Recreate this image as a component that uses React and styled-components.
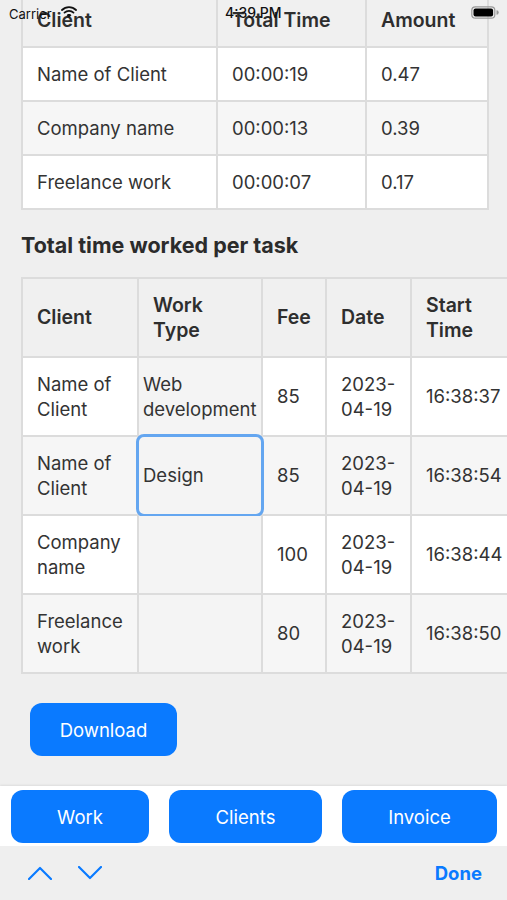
import React from "react";
import styled, { createGlobalStyle } from "styled-components";

const Global = createGlobalStyle`
  html, body { margin: 0; padding: 0; background: #efefef; }
  body { font-family: Inter, "Noto Sans", "Liberation Sans", sans-serif; color: #333; -webkit-font-smoothing: antialiased; }
  * { box-sizing: border-box; }
`;

const BLUE = "#0a7aff";

const Page = styled.div`
  position: relative;
  width: 507px;
  height: 900px;
  overflow: hidden;
  display: flex;
  flex-direction: column;
  background: #efefef;
`;

const Scroll = styled.div`
  flex: 1;
  overflow: hidden;
  min-height: 0;
`;

const Content = styled.div`
  margin-top: -8px;
  padding: 0 0 0 21px;
  display: flex;
  flex-direction: column;
`;

const Table = styled.table`
  border-collapse: collapse;
  table-layout: fixed;
  font-size: 18.5px;
  color: #333;
  width: ${(p) => p.$width}px;
  flex-shrink: 0;
  border: 2px solid #dcdcdc;
`;

const Th = styled.th`
  background: #f0f0f0;
  border: 2px solid #dcdcdc;
  font-weight: 600;
  font-size: 19.5px;
  text-align: left;
  padding: 0 14px;
  height: ${(p) => p.$h}px;
  line-height: 25px;
  color: #2e2e2e;
`;

const Tr = styled.tr`
  background: ${(p) => (p.$alt ? "#f6f6f6" : "#ffffff")};
`;

const Td = styled.td`
  border: 2px solid #dcdcdc;
  padding: 0 14px;
  height: ${(p) => p.$h}px;
  line-height: 25px;
  vertical-align: middle;
`;

const InputTd = styled.td`
  border: 2px solid #dcdcdc;
  background: #f4f4f4;
  padding: 0;
  height: 79px;
  position: relative;
  vertical-align: middle;
`;

const CellInput = styled.div`
  padding: 0 4px;
  line-height: 25px;
  ${(p) =>
    p.$focus &&
    `
    position: absolute;
    inset: -3px -3px -3px -3px;
    border: 3px solid #64a6f0;
    border-radius: 8px;
    display: flex;
    align-items: center;
    padding: 0 4px;
  `}
`;

const Heading = styled.h2`
  margin: 23px 0 20px;
  font-size: 21.5px;
  font-weight: 700;
  color: #2b2b2b;
  line-height: 24px;
`;

const Wide = styled.div`
  width: 520px;
`;

const PrimaryButton = styled.button`
  background: ${BLUE};
  color: #fff;
  border: none;
  border-radius: 12px;
  font-family: inherit;
  font-size: 18.5px;
  height: 53px;
  width: ${(p) => p.$w}px;
  padding: 0;
  cursor: pointer;
`;

const DownloadRow = styled.div`
  margin: 29px 0 30px 9px;
`;

const Toolbar = styled.div`
  background: #fff;
  height: 60px;
  padding: 4px 0 0 11px;
  display: grid;
  grid-template-columns: 138px 153px 155px;
  column-gap: 20px;
  align-items: start;
  box-shadow: 0 -1px 2px rgba(0, 0, 0, 0.08);
`;

const Accessory = styled.div`
  height: 54px;
  background: #efefef;
  display: flex;
  align-items: center;
  padding: 0 25px 0 28px;
  gap: 26px;
`;

const Chevron = styled.svg`
  width: 24px;
  height: 14px;
  display: block;
`;

const Done = styled.span`
  margin-left: auto;
  color: ${BLUE};
  font-weight: 700;
  font-size: 18.5px;
`;

const StatusBar = styled.div`
  position: absolute;
  top: 0;
  left: 0;
  right: 0;
  height: 28px;
  pointer-events: none;
  font-family: Inter, "Liberation Sans", sans-serif;
  color: #111;
`;

const Carrier = styled.span`
  position: absolute;
  left: 9px;
  top: 6px;
  font-size: 13px;
`;

const Clock = styled.span`
  position: absolute;
  left: 225px;
  top: 4px;
  font-size: 14px;
  font-weight: 500;
`;

const Wifi = styled.svg`
  position: absolute;
  left: 61px;
  top: 5px;
`;

const Battery = styled.svg`
  position: absolute;
  left: 471px;
  top: 6px;
`;

const summary = [
  ["Name of Client", "00:00:19", "0.47"],
  ["Company name", "00:00:13", "0.39"],
  ["Freelance work", "00:00:07", "0.17"],
];

const tasks = [
  ["Name of\nClient", "Web\ndevelopment", "85", "2023-\n04-19", "16:38:37"],
  ["Name of\nClient", "Design", "85", "2023-\n04-19", "16:38:54"],
  ["Company\nname", "", "100", "2023-\n04-19", "16:38:44"],
  ["Freelance\nwork", "", "80", "2023-\n04-19", "16:38:50"],
];

const lines = (s) =>
  s.split("\n").map((l, i, a) => (
    <React.Fragment key={i}>
      {l}
      {i < a.length - 1 && <br />}
    </React.Fragment>
  ));

export default function App() {
  return (
    <Page>
      <Global />
      <Scroll>
        <Content>
          <Table $width={466}>
            <colgroup>
              <col style={{ width: 195 }} />
              <col style={{ width: 149 }} />
              <col style={{ width: 122 }} />
            </colgroup>
            <thead>
              <tr>
                <Th $h={54}>Client</Th>
                <Th $h={54}>Total Time</Th>
                <Th $h={54}>Amount</Th>
              </tr>
            </thead>
            <tbody>
              {summary.map((r, i) => (
                <Tr key={i} $alt={i % 2 === 1}>
                  {r.map((c, j) => (
                    <Td key={j} $h={54}>
                      {c}
                    </Td>
                  ))}
                </Tr>
              ))}
            </tbody>
          </Table>

          <Heading>Total time worked per task</Heading>

          <Wide>
            <Table $width={520}>
              <colgroup>
                <col style={{ width: 116 }} />
                <col style={{ width: 124 }} />
                <col style={{ width: 64 }} />
                <col style={{ width: 85 }} />
                <col style={{ width: 131 }} />
              </colgroup>
              <thead>
                <tr>
                  <Th $h={79}>Client</Th>
                  <Th $h={79}>{lines("Work\nType")}</Th>
                  <Th $h={79}>Fee</Th>
                  <Th $h={79}>Date</Th>
                  <Th $h={79}>{lines("Start\nTime")}</Th>
                </tr>
              </thead>
              <tbody>
                {tasks.map((r, i) => (
                  <Tr key={i} $alt={i % 2 === 1}>
                    <Td $h={79}>{lines(r[0])}</Td>
                    <InputTd>
                      <CellInput $focus={i === 1}>{lines(r[1])}</CellInput>
                    </InputTd>
                    <Td $h={79}>{r[2]}</Td>
                    <Td $h={79}>{lines(r[3])}</Td>
                    <Td $h={79}>{r[4]}</Td>
                  </Tr>
                ))}
              </tbody>
            </Table>
          </Wide>

          <DownloadRow>
            <PrimaryButton $w={147}>Download</PrimaryButton>
          </DownloadRow>
        </Content>
      </Scroll>

      <Toolbar>
        <PrimaryButton $w={138}>Work</PrimaryButton>
        <PrimaryButton $w={153}>Clients</PrimaryButton>
        <PrimaryButton $w={155}>Invoice</PrimaryButton>
      </Toolbar>

      <Accessory>
        <Chevron viewBox="0 0 24 14">
          <path d="M1 13 L12 2 L23 13" fill="none" stroke={BLUE} strokeWidth="2.2" strokeLinecap="round" strokeLinejoin="round" />
        </Chevron>
        <Chevron viewBox="0 0 24 14">
          <path d="M1 1 L12 12 L23 1" fill="none" stroke={BLUE} strokeWidth="2.2" strokeLinecap="round" strokeLinejoin="round" />
        </Chevron>
        <Done>Done</Done>
      </Accessory>

      <StatusBar>
        <Carrier>Carrier</Carrier>
        <Wifi width="16" height="13" viewBox="0 0 16 13">
          <path d="M1 5 A10 10 0 0 1 15 5" fill="none" stroke="#111" strokeWidth="1.8" strokeLinecap="round" />
          <path d="M3.5 7.6 A6.5 6.5 0 0 1 12.5 7.6" fill="none" stroke="#111" strokeWidth="1.8" strokeLinecap="round" />
          <path d="M6 10.2 A3 3 0 0 1 10 10.2 L8 12.3 Z" fill="#111" stroke="#111" strokeWidth="1" strokeLinejoin="round" />
        </Wifi>
        <Clock>4:39 PM</Clock>
        <Battery width="28" height="13" viewBox="0 0 28 13">
          <rect x="0.8" y="0.8" width="23" height="11.4" rx="3.5" fill="none" stroke="#999" strokeWidth="1.2" />
          <rect x="2.5" y="2.5" width="19.6" height="8" rx="2" fill="#000" />
          <path d="M25.5 4.3 A2.2 2.2 0 0 1 25.5 8.7 Z" fill="#999" />
        </Battery>
      </StatusBar>
    </Page>
  );
}
